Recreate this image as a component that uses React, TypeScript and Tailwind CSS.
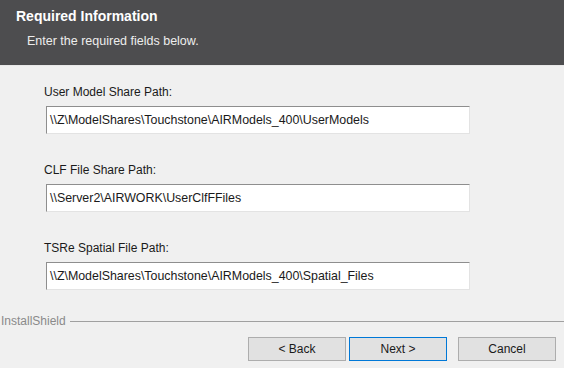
import React from 'react';

const fields = [
  { label: 'User Model Share Path:', value: '\\\\Z\\ModelShares\\Touchstone\\AIRModels_400\\UserModels' },
  { label: 'CLF File Share Path:', value: '\\\\Server2\\AIRWORK\\UserClfFFiles' },
  { label: 'TSRe Spatial File Path:', value: '\\\\Z\\ModelShares\\Touchstone\\AIRModels_400\\Spatial_Files' },
];

const App: React.FC = () => {
  return (
    <div className="w-[564px] h-[368px] bg-[#f0f0f0] flex flex-col overflow-hidden text-[12px] text-black" style={{ fontFamily: '"Liberation Sans", Arial, sans-serif' }}>
      {/* header band */}
      <div className="h-[65px] bg-[#4d4d4f] border-b border-[#e8e8e8] box-content">
        <div className="pl-[16px] pt-[7px] text-[14px] font-bold text-white leading-[18px]">Required Information</div>
        <div className="pl-[27px] pt-[8px] text-[12.5px] text-[#ededed] leading-[16px]">Enter the required fields below.</div>
      </div>

      {/* fields */}
      <div className="flex flex-col gap-[28px] pt-[18px] pl-[44px]">
        {fields.map((f) => (
          <div key={f.label} className="flex flex-col">
            <div className="leading-[16px] text-[#1a1a1a]">{f.label}</div>
            <div className="mt-[6px] ml-[2px] w-[424px] h-[28px] bg-white border border-[#e3e3e3] border-t-[#8e8e8e] border-l-[#8e8e8e] flex items-center pl-[3px] text-[12.4px] text-[#1a1a1a]">
              {f.value}
            </div>
          </div>
        ))}
      </div>

      {/* footer */}
      <div className="mt-auto pb-[7px]">
        <div className="flex items-center">
          <span className="pl-[1px] text-[#8a8a8a] leading-[16px]">InstallShield</span>
          <div className="flex-1 ml-[4px] h-px bg-[#a0a0a0]" />
        </div>
        <div className="flex justify-end pr-[8px] mt-[8px]">
          <button className="w-[98px] h-[24px] bg-[#e1e1e1] border border-[#adadad] text-[#1a1a1a]">&lt; Back</button>
          <button className="ml-[3px] w-[98px] h-[24px] bg-[#e1e1e1] border border-[#0078d7] text-[#1a1a1a]">Next &gt;</button>
          <button className="ml-[11px] w-[98px] h-[24px] bg-[#e1e1e1] border border-[#adadad] text-[#1a1a1a]">Cancel</button>
        </div>
      </div>
    </div>
  );
};

export default App;
